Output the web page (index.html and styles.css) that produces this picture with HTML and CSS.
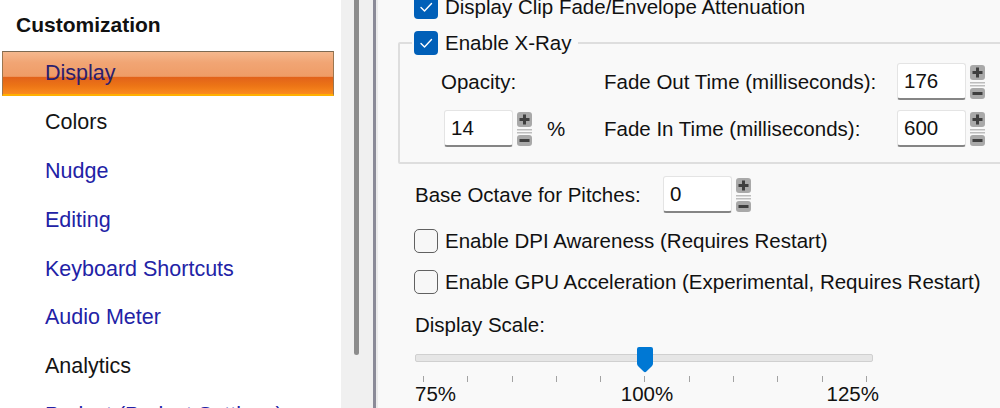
FILE: index.html
```html
<!DOCTYPE html>
<html>
<head>
<meta charset="utf-8">
<link rel="stylesheet" href="styles.css">
</head>
<body>
<div class="window">
  <aside class="nav">
    <div class="nav-list">
      <div class="nav-head">Customization</div>
      <div class="nav-item selected">Display</div>
      <div class="nav-item plain">Colors</div>
      <div class="nav-item link">Nudge</div>
      <div class="nav-item link">Editing</div>
      <div class="nav-item link">Keyboard Shortcuts</div>
      <div class="nav-item link">Audio Meter</div>
      <div class="nav-item plain">Analytics</div>
      <div class="nav-item link">Project (Project Settings)</div>
    </div>
    <div class="gutter"><div class="gutter-thumb"></div></div>
  </aside>
  <div class="divider"></div>
  <main class="panel">
    <div class="check-row first">
      <span class="box checked"><svg viewBox="0 0 24 24" width="24" height="24"><path d="M7 12.5 L10.5 16 L17.5 8.5" fill="none" stroke="#fff" stroke-width="1.4" stroke-linecap="round" stroke-linejoin="round"/></svg></span>
      <span>Display Clip Fade/Envelope Attenuation</span>
    </div>

    <fieldset class="group">
      <legend class="legend">
        <span class="box checked"><svg viewBox="0 0 24 24" width="24" height="24"><path d="M7 12.5 L10.5 16 L17.5 8.5" fill="none" stroke="#fff" stroke-width="1.4" stroke-linecap="round" stroke-linejoin="round"/></svg></span>
        <span>Enable X-Ray</span>
      </legend>
      <div class="group-grid">
        <div class="cell label opacity">Opacity:</div>
        <div class="cell label">Fade Out Time (milliseconds):</div>
        <div class="cell spin">
          <div class="field">176</div>
          <svg class="stepper" viewBox="0 0 15 34" width="15" height="34"><rect x="0" y="0" width="15" height="15" rx="3" fill="#a9a9a9"/><rect x="6" y="2.5" width="3" height="10" fill="#3f3f3f"/><rect x="2.5" y="6" width="10" height="3" fill="#3f3f3f"/><rect x="0" y="17" width="15" height="1.5" fill="#bdbdbd"/><rect x="0" y="20" width="15" height="1.5" fill="#bdbdbd"/><rect x="0" y="23" width="15" height="11" rx="3" fill="#a9a9a9"/><rect x="2.5" y="27" width="10" height="3" fill="#3f3f3f"/></svg>
        </div>
        <div class="cell spin">
          <div class="field">14</div>
          <svg class="stepper" viewBox="0 0 15 34" width="15" height="34"><rect x="0" y="0" width="15" height="15" rx="3" fill="#a9a9a9"/><rect x="6" y="2.5" width="3" height="10" fill="#3f3f3f"/><rect x="2.5" y="6" width="10" height="3" fill="#3f3f3f"/><rect x="0" y="17" width="15" height="1.5" fill="#bdbdbd"/><rect x="0" y="20" width="15" height="1.5" fill="#bdbdbd"/><rect x="0" y="23" width="15" height="11" rx="3" fill="#a9a9a9"/><rect x="2.5" y="27" width="10" height="3" fill="#3f3f3f"/></svg>
          <span class="pct">%</span>
        </div>
        <div class="cell label">Fade In Time (milliseconds):</div>
        <div class="cell spin">
          <div class="field">600</div>
          <svg class="stepper" viewBox="0 0 15 34" width="15" height="34"><rect x="0" y="0" width="15" height="15" rx="3" fill="#a9a9a9"/><rect x="6" y="2.5" width="3" height="10" fill="#3f3f3f"/><rect x="2.5" y="6" width="10" height="3" fill="#3f3f3f"/><rect x="0" y="17" width="15" height="1.5" fill="#bdbdbd"/><rect x="0" y="20" width="15" height="1.5" fill="#bdbdbd"/><rect x="0" y="23" width="15" height="11" rx="3" fill="#a9a9a9"/><rect x="2.5" y="27" width="10" height="3" fill="#3f3f3f"/></svg>
        </div>
      </div>
    </fieldset>

    <div class="octave-row">
      <span class="octave-label">Base Octave for Pitches:</span>
      <div class="spin">
        <div class="field">0</div>
        <svg class="stepper" viewBox="0 0 15 34" width="15" height="34"><rect x="0" y="0" width="15" height="15" rx="3" fill="#a9a9a9"/><rect x="6" y="2.5" width="3" height="10" fill="#3f3f3f"/><rect x="2.5" y="6" width="10" height="3" fill="#3f3f3f"/><rect x="0" y="17" width="15" height="1.5" fill="#bdbdbd"/><rect x="0" y="20" width="15" height="1.5" fill="#bdbdbd"/><rect x="0" y="23" width="15" height="11" rx="3" fill="#a9a9a9"/><rect x="2.5" y="27" width="10" height="3" fill="#3f3f3f"/></svg>
      </div>
    </div>

    <div class="check-row dpi">
      <span class="box unchecked"></span>
      <span>Enable DPI Awareness (Requires Restart)</span>
    </div>
    <div class="check-row gpu">
      <span class="box unchecked"></span>
      <span>Enable GPU Acceleration (Experimental, Requires Restart)</span>
    </div>

    <div class="scale-label">Display Scale:</div>
    <div class="slider">
      <div class="track"></div>
      <svg class="thumb" viewBox="0 0 16 26" width="16" height="26"><path d="M2 0 H14 Q16 0 16 2 V16.5 Q16 18 14.8 19.2 L9.4 24.6 Q8 26 6.6 24.6 L1.2 19.2 Q0 18 0 16.5 V2 Q0 0 2 0 Z" fill="#0078d4"/></svg>
    </div>
    <div class="ticks">
      <i></i><i></i><i></i><i></i><i></i><i></i><i></i><i></i><i></i><i></i><i></i>
    </div>
    <div class="scale-values">
      <span class="v-left">75%</span>
      <span class="v-mid">100%</span>
      <span class="v-right">125%</span>
    </div>
  </main>
</div>
</body>
</html>
```

FILE: styles.css
```css
* { box-sizing: border-box; }

html, body {
  margin: 0;
  padding: 0;
  width: 1000px;
  height: 408px;
  overflow: hidden;
  background: #f9f9f9;
}

.window {
  display: flex;
  width: 1000px;
  height: 408px;
  overflow: hidden;
  font-family: "Liberation Sans", Arial, sans-serif;
}

/* ---------- left navigation ---------- */
.nav {
  display: flex;
  flex: 0 0 373px;
  height: 408px;
}

.nav-list {
  display: flex;
  flex-direction: column;
  width: 341px;
  background: #ffffff;
  font-size: 21.5px;
  overflow: hidden;
}

.nav-head {
  flex: 0 0 49px;
  line-height: 49px;
  padding-left: 16px;
  font-weight: bold;
  font-size: 21px;
  color: #111;
}

.nav-item {
  flex: 0 0 45px;
  line-height: 45px;
  margin: 2px 0 1.9px 2px;
  width: 332px;
  padding-left: 43px;
  white-space: nowrap;
}

.nav-item.plain { color: #141414; }
.nav-item.link { color: #2222a6; }

.nav-item.selected {
  color: #2b1e6e;
  border-top: 1px solid #7d6a52;
  border-left: 1px solid #9a7650;
  border-right: 1px solid #9a7650;
  border-bottom: 2px solid #ffb000;
  line-height: 42px;
  padding-left: 42px;
  background: linear-gradient(to bottom,
    #f5b88e 0%,
    #f1a574 25%,
    #ef9c66 58%,
    #e2621a 60%,
    #ec7416 80%,
    #fb8b1e 100%);
}

.gutter {
  width: 32px;
  background: #f0f0f0;
  padding-left: 13px;
}

.gutter-thumb {
  width: 5px;
  height: 355px;
  background: #8c8c8c;
  border-radius: 0 0 3px 3px;
}

.divider {
  flex: 0 0 5px;
  border-left: 3px solid #8b8b98;
  background: #ebebeb;
}

/* ---------- right panel ---------- */
.panel {
  flex: 1;
  background: #f9f9f9;
  padding-left: 36px;
  font-size: 20.5px;
  color: #111;
  overflow: hidden;
}

.check-row {
  display: flex;
  align-items: center;
  gap: 7px;
  height: 24px;
  white-space: nowrap;
}

.check-row.first { margin-top: -5px; }
.check-row.dpi { margin-top: 16px; }
.check-row.gpu { margin-top: 17px; }

.box {
  flex: 0 0 24px;
  width: 24px;
  height: 24px;
  border-radius: 4px;
  display: block;
}

.box svg { display: block; }

.box.checked { background: #005fb8; }

.box.unchecked {
  background: #f7f7f7;
  border: 1.5px solid #616161;
  border-radius: 5px;
}

.group {
  margin: 12px -40px 0 -16px;
  padding: 0 0 15px 12px;
  border: 2px solid #dedede;
  border-radius: 2px;
  min-width: 0;
}

.legend {
  display: flex;
  align-items: center;
  gap: 7px;
  padding: 0 7px 0 2px;
  height: 24px;
  white-space: nowrap;
}

.group-grid {
  display: grid;
  grid-template-columns: 160px 293px auto;
  grid-template-rows: 37px 37px;
  row-gap: 10px;
  margin-left: 32px;
  padding-top: 8px;
}

.cell {
  display: flex;
  align-items: center;
  white-space: nowrap;
}

.opacity { margin-left: -3px; }

.spin {
  display: flex;
  align-items: center;
  gap: 4px;
}

.field {
  width: 69px;
  height: 37px;
  background: #ffffff;
  border: 1px solid #e4e4e4;
  border-bottom: 2px solid #858585;
  border-radius: 3px;
  padding-left: 6px;
  line-height: 34px;
  color: #111;
}

.stepper { display: block; flex: 0 0 15px; }

.pct { margin-left: 11px; }

.octave-row {
  display: flex;
  align-items: center;
  margin-top: 12px;
  height: 37px;
}

.octave-label {
  width: 249px;
  white-space: nowrap;
  padding-left: 1px;
}

.scale-label {
  margin-top: 19px;
  line-height: 24px;
  height: 24px;
  padding-left: 1px;
}

.slider {
  position: relative;
  width: 458px;
  height: 26px;
  margin-top: 10px;
  margin-left: 1px;
}

.track {
  position: relative;
  top: 7px;
  height: 8px;
  background: #e6e6e6;
  border: 1px solid #d0d0d0;
  border-radius: 2px;
}

.thumb {
  position: absolute;
  left: calc(50.2% - 8px);
  top: 0;
  display: block;
}

.ticks {
  display: flex;
  justify-content: space-between;
  width: 444px;
  height: 6px;
  margin: 3px 0 0 9px;
}

.ticks i {
  display: block;
  width: 1px;
  height: 6px;
  background: #a3a3a3;
}

.scale-values {
  display: grid;
  grid-template-columns: 1fr auto 1fr;
  width: 464px;
  margin-left: 1px;
  line-height: 24px;
  height: 24px;
}

.v-left { justify-self: start; }
.v-mid { justify-self: center; }
.v-right { justify-self: end; }
```
